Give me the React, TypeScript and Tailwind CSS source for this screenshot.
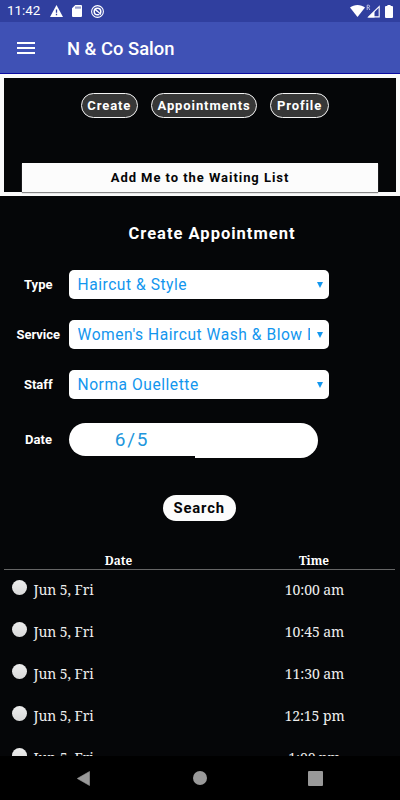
import React from "react";

const selects = [
  { label: "Type", value: "Haircut & Style" },
  { label: "Service", value: "Women's Haircut Wash & Blow Dry" },
  { label: "Staff", value: "Norma Ouellette" },
];

const slots = ["10:00 am", "10:45 am", "11:30 am", "12:15 pm", "1:00 pm"];

function StatusBar() {
  return (
    <div className="flex h-[22px] shrink-0 items-center bg-[#303f9f] pl-[7px] text-white">
      <span className="w-[43px] text-[13.4px] leading-[22px]">11:42</span>
      <svg className="h-[12px] w-[13px]" viewBox="0 0 13 12" fill="none">
        <path d="M6.5 0 13 12H0Z" fill="white" />
        <path d="M6.5 4.4v3.3M6.5 8.8v1.4" stroke="#303f9f" strokeWidth="1.3" />
      </svg>
      <svg className="ml-[9px] h-[12px] w-[10px]" viewBox="0 0 10 12" fill="none">
        <path d="M3.3 0H9q1 0 1 1v10q0 1-1 1H1q-1 0-1-1V3.3Z" fill="white" />
        <path d="M4 1.5v2.2M6 1.5v2.2M8 1.5v2.2" stroke="#303f9f" strokeWidth="1" />
      </svg>
      <svg className="ml-[9px] h-[13px] w-[13px]" viewBox="0 0 13 13" fill="none" stroke="white">
        <circle cx="6.5" cy="6.5" r="5.9" strokeWidth="1.1" />
        <circle cx="6.5" cy="6.5" r="3.3" strokeWidth="1.5" />
        <path d="m3.8 4 6 5.5" strokeWidth="1.6" />
        <path d="M6.3 7.1 9 9.8" stroke="#303f9f" strokeWidth="0.7" />
      </svg>
      <svg className="ml-auto h-[12px] w-[15px]" viewBox="0 0 15 12">
        <path d="M0 2.6C4-.8 11-.8 15 2.6L7.5 12Z" fill="white" />
      </svg>
      <svg className="ml-[1px] h-[14px] w-[15px]" viewBox="0 0 15 14" fill="none">
        <path d="M1.2 6V1.2h1.4q1 0 1 1.1t-1 1.1H1.2M2.5 3.4 3.8 6" stroke="#c5cae9" strokeWidth="0.9" />
        <path d="M13.2 2.5v10.4H2.6Z" stroke="white" strokeWidth="1.1" />
        <path d="M8.5 7v6.4H2Z" fill="white" />
      </svg>
      <svg className="ml-[4px] mr-[7px] h-[13px] w-[8px]" viewBox="0 0 8 13">
        <path d="M2.4 0h3.2v1H7q1 0 1 1v10q0 1-1 1H1q-1 0-1-1V2q0-1 1-1h1.4Z" fill="white" />
      </svg>
    </div>
  );
}

function AppBar() {
  return (
    <header className="flex h-[52px] shrink-0 items-center border-b border-[#0909a0] bg-[#3f51b5] pl-[17px] text-white">
      <div className="flex w-[18px] flex-col gap-[3px]">
        <span className="h-[2px] bg-white" />
        <span className="h-[2px] bg-white" />
        <span className="h-[2px] bg-white" />
      </div>
      <h1 className="ml-[32px] pt-[2px] text-[18.4px] font-medium leading-[26px]">N &amp; Co Salon</h1>
    </header>
  );
}

function Pill({ className, children }: { className: string; children: React.ReactNode }) {
  return (
    <button
      className={`h-[25px] rounded-[12.5px] border border-[#f4f4f4] bg-[#373737] text-center text-[13px] font-bold leading-[23px] tracking-[0.9px] whitespace-nowrap ${className}`}
    >
      {children}
    </button>
  );
}

function NavPanel() {
  return (
    <section className="h-[122px] shrink-0 border-4 border-[#fafafa] bg-[#050608] pt-[15px] text-white">
      <nav className="ml-[76.5px] flex gap-[13px]">
        <Pill className="w-[57.5px]">Create</Pill>
        <Pill className="w-[106px]">Appointments</Pill>
        <Pill className="w-[59px]">Profile</Pill>
      </nav>
      <button className="mt-[45px] ml-[18px] block h-[29px] w-[356px] bg-[#fcfcfc] text-center text-[13px] font-bold leading-[29px] tracking-[0.95px] text-[#050608] shadow-[0_1px_1px_#888]">
        Add Me to the Waiting List
      </button>
    </section>
  );
}

function SelectRow({ label, value }: { label: string; value: string }) {
  return (
    <div className="flex h-[50px] items-start">
      <label className="ml-[8px] w-[60.5px] text-center text-[13px] font-bold leading-[29px]">{label}</label>
      <div className="ml-[0.5px] flex h-[28.5px] w-[259.5px] items-center rounded-[5px] bg-white pl-[8.5px] text-[#1296ee]">
        <span className="w-[232px] overflow-hidden pt-[1px] text-[15.6px] leading-[28px] tracking-[0.53px] whitespace-nowrap">
          {value}
        </span>
        <svg className="mt-[2px] ml-[7.5px] h-[6px] w-[6px]" viewBox="0 0 6 6">
          <path d="M0 0h6L3 6Z" fill="#1296ee" />
        </svg>
      </div>
    </div>
  );
}

function SlotTable() {
  return (
    <section className="mt-[30px] text-[#eeeeee] font-['Noto_Serif','Droid_Serif','DejaVu_Serif_Condensed','DejaVu_Serif',serif]">
      <div className="ml-[4px] flex h-[19px] w-[391px] border-b border-[#666] text-[11.8px] font-bold leading-[18px] text-white">
        <span className="w-[229px] text-center">Date</span>
        <span className="w-[162px] text-center">Time</span>
      </div>
      {slots.map((time) => (
        <div key={time} className="flex h-[42px] items-start text-[14px]">
          <span className="mt-[10px] ml-[12px] h-[14.5px] w-[14.5px] rounded-full bg-linear-to-b from-[#ededed] to-[#d9d9d9]" />
          <span className="ml-[7px] w-[199.5px] leading-[39px] tracking-[-0.08px] whitespace-nowrap">Jun 5, Fri</span>
          <span className="w-[163px] text-center leading-[39px] tracking-[-0.08px] whitespace-nowrap">{time}</span>
        </div>
      ))}
    </section>
  );
}

export default function App() {
  return (
    <div className="flex h-[800px] w-[400px] flex-col overflow-hidden bg-[#050608] font-['Roboto',sans-serif]">
      <StatusBar />
      <AppBar />
      <NavPanel />
      <main className="h-[560px] shrink-0 overflow-hidden text-white">
        <h2 className="mt-[26px] ml-[24px] text-center text-[16.5px] font-bold leading-[24px] tracking-[1px]">
          Create Appointment
        </h2>
        <div className="mt-[24px]">
          {selects.map((s) => (
            <SelectRow key={s.label} {...s} />
          ))}
        </div>
        <div className="mt-[3px] flex h-[36px] items-start">
          <label className="ml-[8px] w-[61px] text-center text-[13px] font-bold leading-[34px]">Date</label>
          <div className="h-[32.5px] w-[126px] rounded-l-full bg-white text-center text-[19px] leading-[33px] tracking-[1.7px] text-[#2196dc]">
            6/5
          </div>
          <div className="h-[35px] w-[122.5px] rounded-r-full bg-white" />
        </div>
        <button className="mt-[36px] ml-[163px] block h-[26px] w-[72.5px] rounded-full bg-[#fcfcfc] text-center text-[14.8px] font-bold leading-[27px] tracking-[0.85px] text-[#050608]">
          Search
        </button>
        <SlotTable />
      </main>
      <footer className="flex h-[44px] shrink-0 items-center bg-black">
        <svg className="ml-[77px] h-[15px] w-[13px]" viewBox="0 0 13 15">
          <path d="M12.5.5v14L.3 7.5Z" fill="#999" stroke="#999" strokeWidth="0.6" strokeLinejoin="round" />
        </svg>
        <span className="ml-[103px] h-[14px] w-[14px] rounded-full bg-[#999]" />
        <span className="ml-[101px] h-[15px] w-[15px] rounded-[1px] bg-[#999]" />
      </footer>
    </div>
  );
}
